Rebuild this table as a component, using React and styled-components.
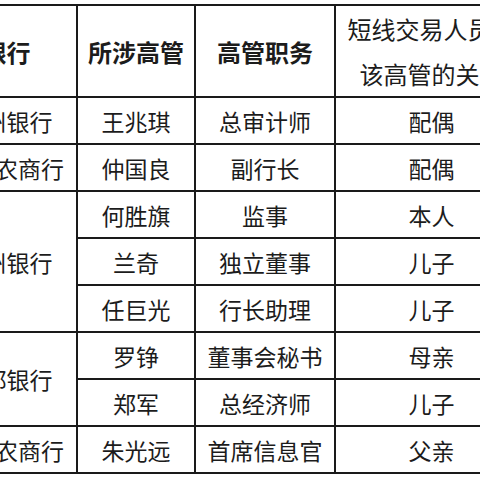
import React from 'react';
import styled, { createGlobalStyle } from 'styled-components';

const GlobalStyle = createGlobalStyle`
  html, body {
    margin: 0;
    padding: 0;
    background: #ffffff;
    overflow: hidden;
  }
  body {
    font-family: "Noto Sans CJK SC", "Noto Sans", sans-serif;
  }
`;

const Page = styled.div`
  width: 480px;
  height: 480px;
  overflow: hidden;
  padding-top: 4px;
  box-sizing: border-box;
`;

const Table = styled.table`
  border-collapse: collapse;
  margin-left: -65px;
  table-layout: fixed;
  width: 592px;
  color: #1c1c1c;
`;

const Col = styled.col`
  width: ${(p) => p.$w}px;
`;

const Row = styled.tr`
  height: ${(p) => (p.$head ? 92 : 47)}px;
`;

const HeadCell = styled.th`
  border: 2px solid #1a1a1a;
  padding: 0;
  font-size: 24px;
  font-weight: ${(p) => (p.$light ? 400 : 700)};
  line-height: 45px;
  text-align: center;
  vertical-align: middle;
  white-space: nowrap;
`;

const Cell = styled.td`
  border: 2px solid #1a1a1a;
  padding: 0;
  font-size: 23px;
  line-height: 30px;
  text-align: center;
  vertical-align: middle;
  white-space: nowrap;
`;

const groups = [
  { bank: '郑州银行', people: [['王兆琪', '总审计师', '配偶']] },
  { bank: '江阴农商行', people: [['仲国良', '副行长', '配偶']] },
  {
    bank: '苏州银行',
    people: [
      ['何胜旗', '监事', '本人'],
      ['兰奇', '独立董事', '儿子'],
      ['任巨光', '行长助理', '儿子'],
    ],
  },
  {
    bank: '成都银行',
    people: [
      ['罗铮', '董事会秘书', '母亲'],
      ['郑军', '总经济师', '儿子'],
    ],
  },
  { bank: '紫金农商行', people: [['朱光远', '首席信息官', '父亲']] },
];

export default function App() {
  return (
    <>
      <GlobalStyle />
      <Page>
        <Table>
          <colgroup>
            <Col $w={141} />
            <Col $w={118} />
            <Col $w={140} />
            <Col $w={193} />
          </colgroup>
          <thead>
            <Row $head>
              <HeadCell>银行</HeadCell>
              <HeadCell>所涉高管</HeadCell>
              <HeadCell>高管职务</HeadCell>
              <HeadCell $light>
                短线交易人员与
                <br />
                该高管的关系
              </HeadCell>
            </Row>
          </thead>
          <tbody>
            {groups.map((g) =>
              g.people.map((p, i) => (
                <Row key={g.bank + p[0]}>
                  {i === 0 && <Cell rowSpan={g.people.length}>{g.bank}</Cell>}
                  <Cell>{p[0]}</Cell>
                  <Cell>{p[1]}</Cell>
                  <Cell>{p[2]}</Cell>
                </Row>
              ))
            )}
          </tbody>
        </Table>
      </Page>
    </>
  );
}
